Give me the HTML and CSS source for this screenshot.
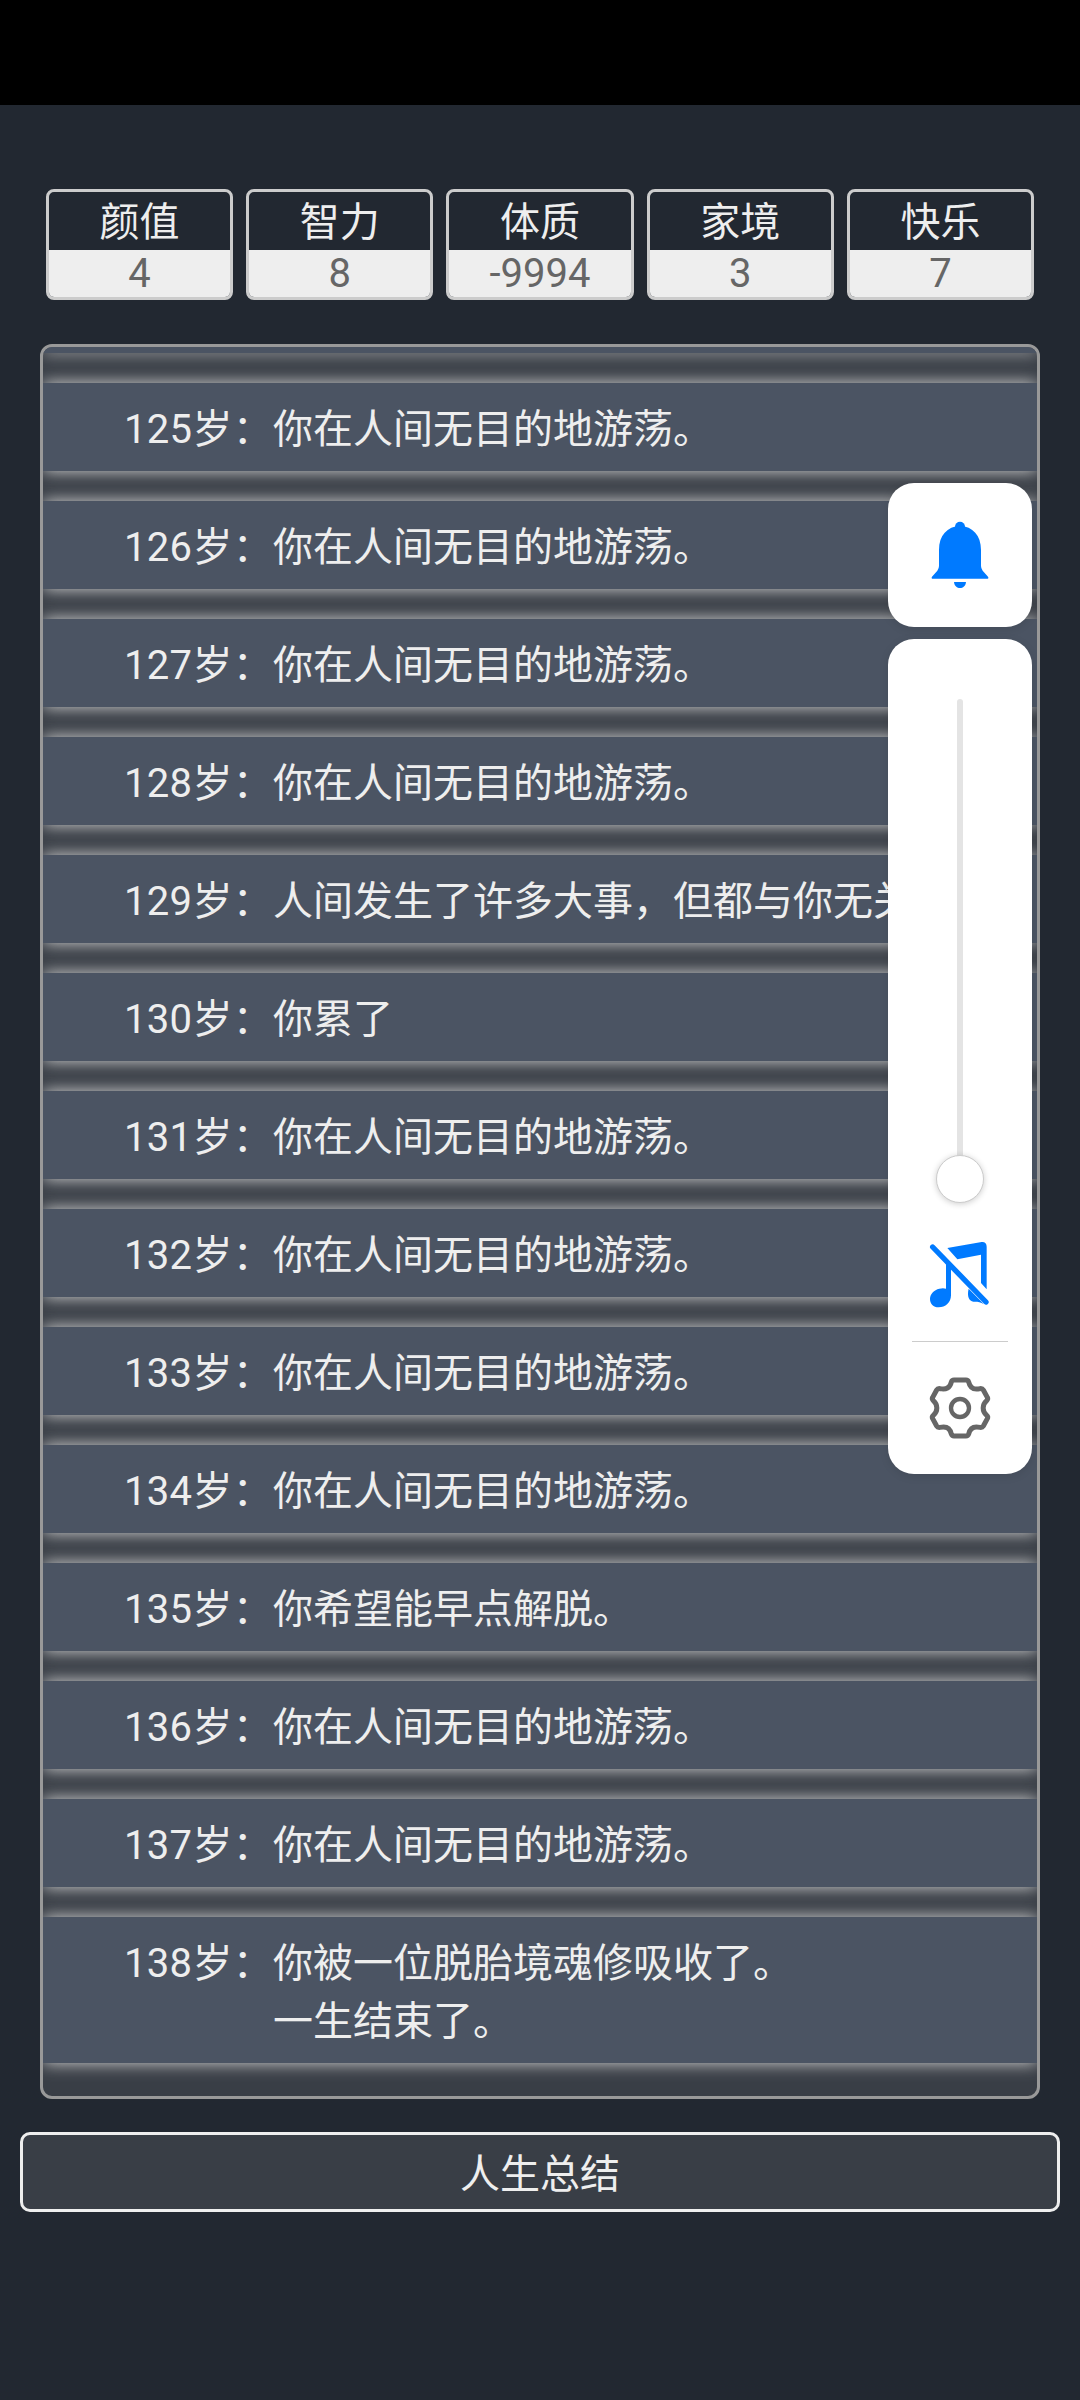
FILE: index.html
```html
<!DOCTYPE html>
<html lang="zh-CN">
<head>
    <meta charset="UTF-8">
    <meta name="viewport" content="width=device-width, initial-scale=1.0">
    <title>人生重开</title>
    <link rel="stylesheet" href="styles.css">
</head>
<body>
    <div class="status-bar"></div>

    <div class="stats">
        <div class="stat"><div class="stat-name">颜值</div><div class="stat-value">4</div></div>
        <div class="stat"><div class="stat-name">智力</div><div class="stat-value">8</div></div>
        <div class="stat"><div class="stat-name">体质</div><div class="stat-value">-9994</div></div>
        <div class="stat"><div class="stat-name">家境</div><div class="stat-value">3</div></div>
        <div class="stat"><div class="stat-name">快乐</div><div class="stat-value">7</div></div>
    </div>

    <div class="trajectory">
        <div class="event event-cut"></div>
        <div class="event"><span class="age">125岁：</span><span class="desc">你在人间无目的地游荡。</span></div>
        <div class="event"><span class="age">126岁：</span><span class="desc">你在人间无目的地游荡。</span></div>
        <div class="event"><span class="age">127岁：</span><span class="desc">你在人间无目的地游荡。</span></div>
        <div class="event"><span class="age">128岁：</span><span class="desc">你在人间无目的地游荡。</span></div>
        <div class="event"><span class="age">129岁：</span><span class="desc">人间发生了许多大事，但都与你无关。</span></div>
        <div class="event"><span class="age">130岁：</span><span class="desc">你累了</span></div>
        <div class="event"><span class="age">131岁：</span><span class="desc">你在人间无目的地游荡。</span></div>
        <div class="event"><span class="age">132岁：</span><span class="desc">你在人间无目的地游荡。</span></div>
        <div class="event"><span class="age">133岁：</span><span class="desc">你在人间无目的地游荡。</span></div>
        <div class="event"><span class="age">134岁：</span><span class="desc">你在人间无目的地游荡。</span></div>
        <div class="event"><span class="age">135岁：</span><span class="desc">你希望能早点解脱。</span></div>
        <div class="event"><span class="age">136岁：</span><span class="desc">你在人间无目的地游荡。</span></div>
        <div class="event"><span class="age">137岁：</span><span class="desc">你在人间无目的地游荡。</span></div>
        <div class="event"><span class="age">138岁：</span><span class="desc">你被一位脱胎境魂修吸收了。<br>一生结束了。</span></div>
    </div>

    <button class="summary-btn">人生总结</button>

    <!-- 悬浮工具 -->
    <div class="side-tools">
        <div class="tool-card bell-card">
            <svg class="icon" viewBox="180 165 240 240">
                <circle cx="300" cy="200" r="15" fill="#007aff"/>
                <path fill="#007aff" d="M237 270C237 225 262 200 300 197C338 200 363 225 363 270V318Q363 325 368 332L384 350Q388 356 380 356H220Q212 356 216 350L232 332Q237 325 237 318Z"/>
                <path fill="#007aff" d="M282 366H318C316 390 284 390 282 366Z"/>
            </svg>
        </div>
        <div class="tool-card music-card">
            <div class="slider">
                <div class="slider-track"></div>
                <div class="slider-thumb"></div>
            </div>
            <svg class="icon-music" viewBox="0 0 240 252">
                <path fill="#007aff" d="M82 48L185 30Q200 29 200 44V172L183 153V68L112 82Z"/>
                <path fill="#007aff" d="M78 84L93 100V190C93 212 76 226 56 226C40 226 30 215 30 201C30 186 42 174 58 170C66 168 72 168 78 170Z"/>
                <path fill="#007aff" d="M146 170L192 217C180 208 170 209 160 209C148 207 140 194 146 170Z"/>
                <path stroke="#007aff" stroke-width="16" stroke-linecap="round" fill="none" d="M38 45L198 210"/>
            </svg>
            <div class="tool-divider"></div>
            <svg class="icon-gear" viewBox="0 0 240 240">
                <path fill="none" stroke="#666" stroke-width="15" stroke-linejoin="round" d="M102 36H138Q144 36 146 42C150 60 162 66 180 62Q187 61 190 66L202 88Q205 93 200 98C186 110 186 130 200 142Q205 147 202 152L190 174Q187 179 180 178C162 174 150 180 146 198Q144 204 138 204H102Q96 204 94 198C90 180 78 174 60 178Q53 179 50 174L38 152Q35 147 40 142C54 130 54 110 40 98Q35 93 38 88L50 66Q53 61 60 62C78 66 90 60 94 42Q96 36 102 36Z"/>
                <circle cx="120" cy="120" r="27" fill="none" stroke="#666" stroke-width="13"/>
            </svg>
        </div>
    </div>
</body>
</html>
```

FILE: styles.css
```css
body {
    margin: 0;
    padding: 0;
    width: 1080px;
    height: 2400px;
    position: relative;
    overflow: hidden;
    background: #222831;
    color: #eeeeee;
    font-family: Roboto, 'Noto Sans CJK SC', sans-serif;
    font-size: 40px;
}

.status-bar {
    height: 105px;
    background: #000000;
}

.stats {
    display: grid;
    grid-template-columns: repeat(5, 1fr);
    gap: 13px;
    margin: 84px 46px 0 46px;
}

.stat {
    height: 111px;
    box-sizing: border-box;
    border: 3px solid #cccccc;
    border-radius: 8px;
    overflow: hidden;
    text-align: center;
}

.stat-name {
    height: 58px;
    line-height: 62px;
    color: #eeeeee;
}

.stat-value {
    height: 47px;
    line-height: 47px;
    background: #eeeeee;
    color: #666666;
}

.trajectory {
    height: 1755px;
    box-sizing: border-box;
    margin: 44px 40px 0 40px;
    border: 3px solid #999999;
    border-radius: 12px;
    overflow: hidden;
    background: #393e46;
}

.event {
    display: flex;
    padding: 18px 0 12px;
    margin-bottom: 30px;
    line-height: 58px;
    background: #4b5463;
    box-shadow: 0 0 16px #d8d8d8;
}

.event-cut {
    height: 6px;
    padding: 0;
}

.age {
    flex: none;
    width: 230px;
    text-align: right;
    letter-spacing: 0.3px;
}

.summary-btn {
    display: block;
    width: 1040px;
    height: 80px;
    margin: 33px 0 0 20px;
    padding: 0 0 2px;
    border: 3px solid #eeeeee;
    border-radius: 10px;
    background: #393e46;
    color: #eeeeee;
    font-family: inherit;
    font-size: 40px;
}

.side-tools {
    position: absolute;
    top: 483px;
    right: 48px;
    width: 144px;
    display: flex;
    flex-direction: column;
    gap: 12px;
}

.tool-card {
    background: #ffffff;
    border-radius: 26px;
    display: flex;
    flex-direction: column;
    align-items: center;
    box-shadow: 0 2px 10px rgba(0, 0, 0, 0.1);
}

.bell-card {
    height: 144px;
    justify-content: center;
}

.icon {
    width: 80px;
    height: 80px;
}

.music-card {
    height: 835px;
    padding-top: 60px;
    box-sizing: border-box;
}

.slider {
    position: relative;
    width: 48px;
    height: 504px;
    flex: none;
}

.slider-track {
    width: 6px;
    height: 480px;
    margin: 0 auto;
    border-radius: 3px;
    background: #e4e4e4;
}

.slider-thumb {
    position: absolute;
    left: 0;
    bottom: 0;
    width: 48px;
    height: 48px;
    box-sizing: border-box;
    border: 1px solid #cccccc;
    border-radius: 50%;
    background: #ffffff;
    box-shadow: 0 1px 6px rgba(0, 0, 0, 0.2);
}

.icon-music {
    flex: none;
    width: 80px;
    height: 84px;
    margin-top: 29px;
}

.tool-divider {
    flex: none;
    width: 96px;
    height: 1px;
    margin-top: 25px;
    background: #cccccc;
}

.icon-gear {
    flex: none;
    width: 80px;
    height: 80px;
    margin-top: 26px;
}
```
